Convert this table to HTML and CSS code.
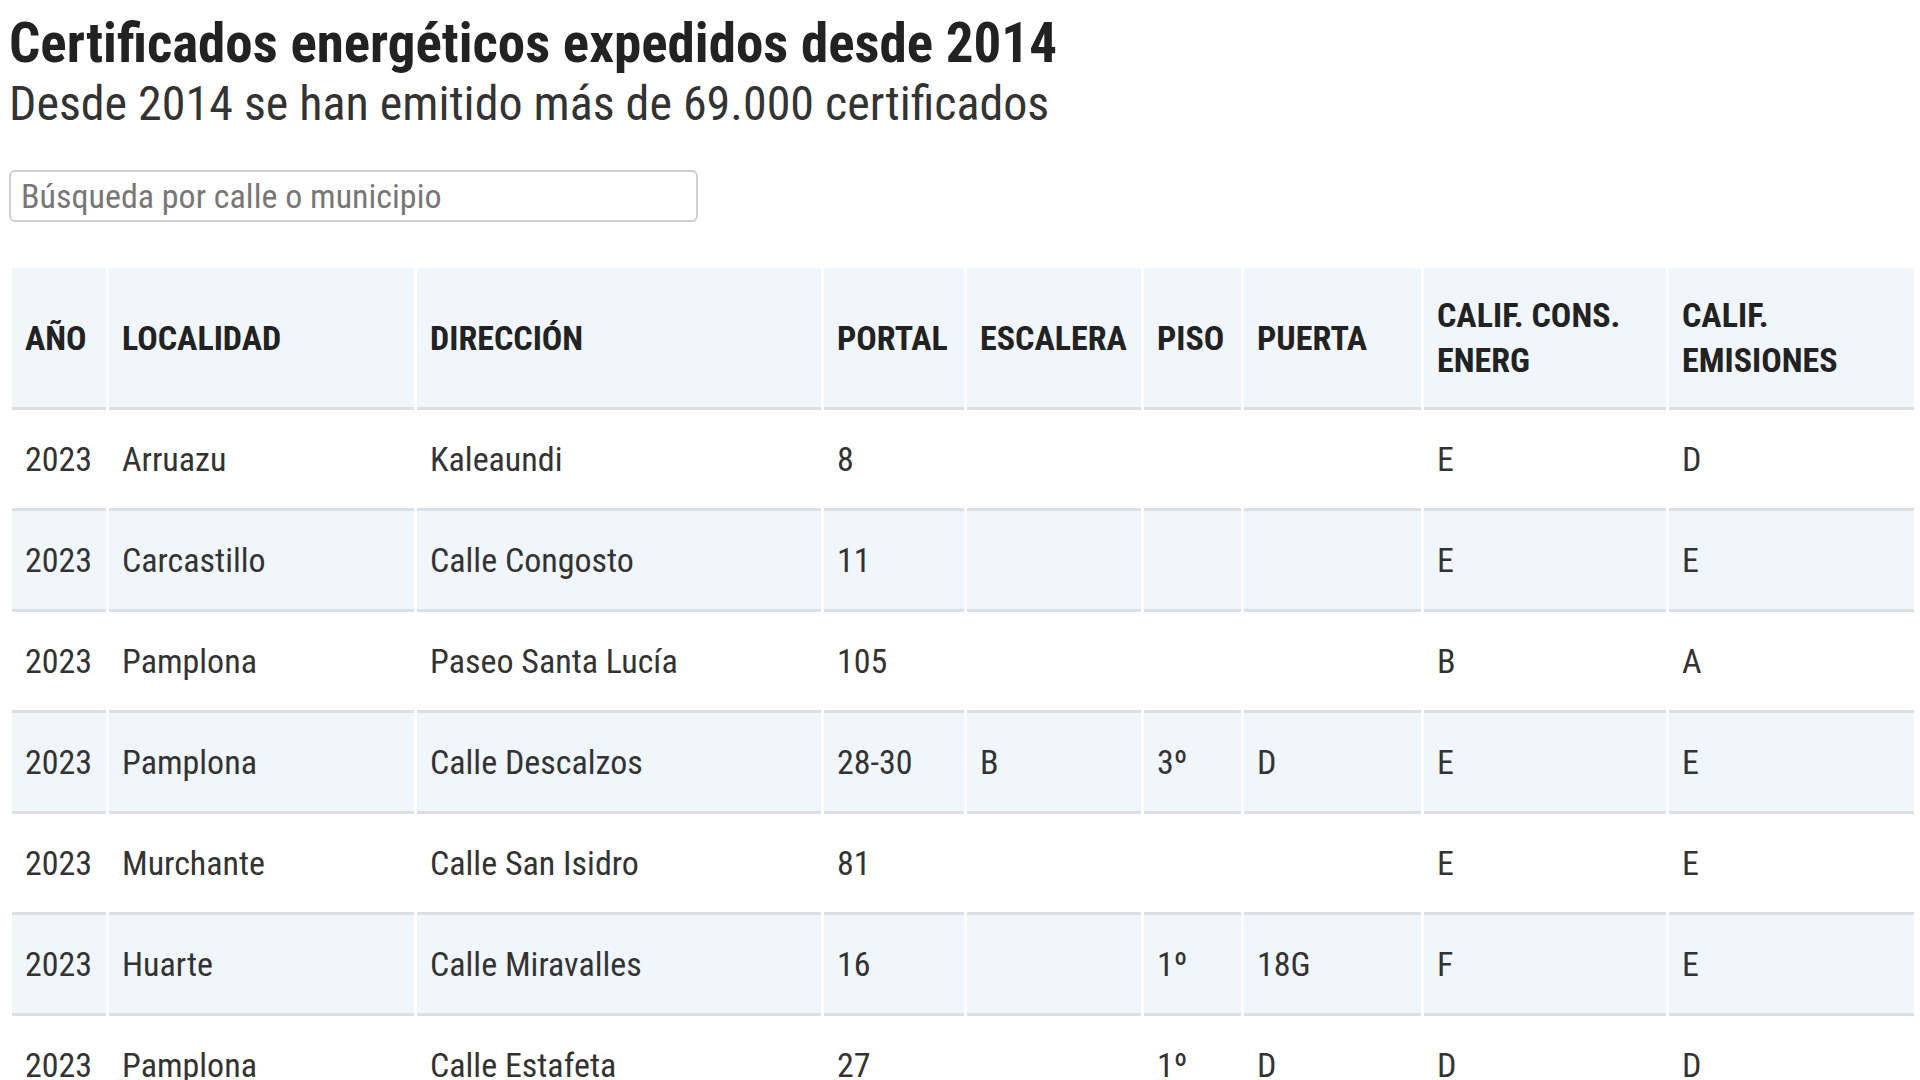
FILE: index.html
```html
<!DOCTYPE html>
<html lang="es">
<head>
<meta charset="utf-8">
<title>Certificados energéticos</title>
<link rel="stylesheet" href="styles.css">
</head>
<body>
<main class="page">
  <header class="intro">
    <h1 class="title">Certificados energéticos expedidos desde 2014</h1>
    <p class="subtitle">Desde 2014 se han emitido más de 69.000 certificados</p>
  </header>
  <div class="search">
    <input class="search-input" type="text" placeholder="Búsqueda por calle o municipio">
  </div>
  <div class="table-wrap">
    <table class="data">
      <colgroup>
        <col class="c-year"><col class="c-town"><col class="c-addr"><col class="c-portal"><col class="c-stair"><col class="c-floor"><col class="c-door"><col class="c-cons"><col class="c-emis">
      </colgroup>
      <thead>
        <tr>
          <th>AÑO</th><th>LOCALIDAD</th><th>DIRECCIÓN</th><th>PORTAL</th><th>ESCALERA</th><th>PISO</th><th>PUERTA</th><th>CALIF. CONS. ENERG</th><th>CALIF. EMISIONES</th>
        </tr>
      </thead>
      <tbody>
        <tr><td>2023</td><td>Arruazu</td><td>Kaleaundi</td><td>8</td><td></td><td></td><td></td><td>E</td><td>D</td></tr>
        <tr><td>2023</td><td>Carcastillo</td><td>Calle Congosto</td><td>11</td><td></td><td></td><td></td><td>E</td><td>E</td></tr>
        <tr><td>2023</td><td>Pamplona</td><td>Paseo Santa Lucía</td><td>105</td><td></td><td></td><td></td><td>B</td><td>A</td></tr>
        <tr><td>2023</td><td>Pamplona</td><td>Calle Descalzos</td><td>28-30</td><td>B</td><td>3º</td><td>D</td><td>E</td><td>E</td></tr>
        <tr><td>2023</td><td>Murchante</td><td>Calle San Isidro</td><td>81</td><td></td><td></td><td></td><td>E</td><td>E</td></tr>
        <tr><td>2023</td><td>Huarte</td><td>Calle Miravalles</td><td>16</td><td></td><td>1º</td><td>18G</td><td>F</td><td>E</td></tr>
        <tr><td>2023</td><td>Pamplona</td><td>Calle Estafeta</td><td>27</td><td></td><td>1º</td><td>D</td><td>D</td><td>D</td></tr>
      </tbody>
    </table>
  </div>
</main>
</body>
</html>
```
FILE: styles.css
```css
html, body {
  margin: 0;
  padding: 0;
  background: #ffffff;
}

body {
  font-family: "Roboto Condensed", Roboto, "Liberation Sans Narrow", sans-serif;
  font-stretch: condensed;
  color: #333333;
  overflow: hidden;
}

.page {
  padding: 0 4px 0 9px;
}

.title {
  margin: 12px 0 0 0;
  font-size: 55px;
  line-height: 62px;
  font-weight: 700;
  color: #222222;
}

.subtitle {
  margin: 3px 0 0 0;
  font-size: 48px;
  line-height: 54px;
  font-weight: 400;
  color: #333333;
}

.search {
  margin-top: 39px;
}

.search-input {
  box-sizing: border-box;
  width: 689px;
  height: 52px;
  border: 2px solid #cfcfcf;
  border-radius: 6px;
  padding: 0 10px;
  font-family: inherit;
  font-stretch: condensed;
  font-size: 34px;
  color: #333;
  outline: none;
}

.search-input::placeholder {
  color: #777777;
}

.table-wrap {
  margin-top: 46px;
}

.data {
  width: 100%;
  table-layout: fixed;
  border-collapse: separate;
  border-spacing: 3px 0;
  font-size: 34px;
}

.c-year { width: 94px; }
.c-town { width: 305px; }
.c-addr { width: 404px; }
.c-portal { width: 140px; }
.c-stair { width: 174px; }
.c-floor { width: 97px; }
.c-door { width: 177px; }
.c-cons { width: 242px; }
.c-emis { width: 245px; }

.data th,
.data td {
  text-align: left;
  padding: 27px 13px 26px 13px;
  line-height: 45px;
  border-bottom: 3px solid #dcdfe3;
  vertical-align: middle;
  white-space: normal;
}

.data th {
  background: #f0f6fc;
  font-weight: 700;
  color: #222222;
  padding-top: 25px;
  padding-bottom: 24px;
}

.data td {
  color: #333333;
}

.data tbody tr:nth-child(even) td {
  background: #f0f6fc;
}
```
